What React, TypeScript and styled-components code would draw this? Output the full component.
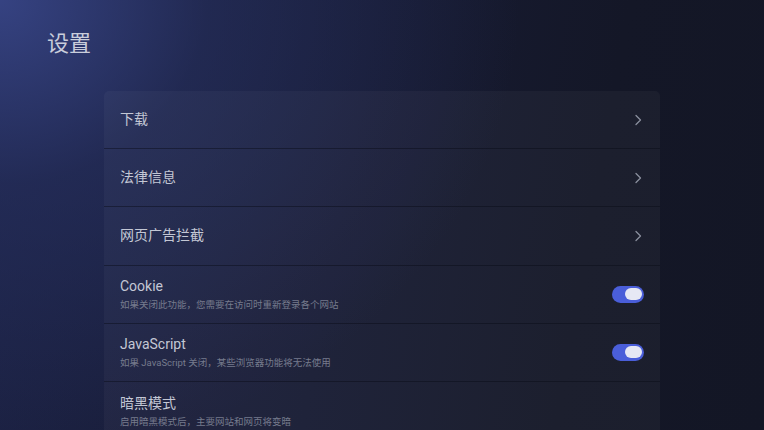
import React from "react";
import styled, { createGlobalStyle } from "styled-components";

const Global = createGlobalStyle`
  html, body { margin: 0; padding: 0; background: #131626; }
  * { box-sizing: border-box; }
`;

const Page = styled.div`
  width: 764px;
  height: 430px;
  overflow: hidden;
  font-family: Roboto, "Noto Sans CJK SC", sans-serif;
  background:
    radial-gradient(ellipse 520px 460px at 0% 0%, rgba(58, 72, 140, 0.85) 0%, rgba(40, 50, 100, 0.55) 40%, rgba(25, 30, 60, 0) 100%),
    linear-gradient(100deg, #1c2245 0%, #171b33 45%, #141727 75%, #131625 100%);
  display: flex;
  flex-direction: column;
`;

const Title = styled.h1`
  margin: 32px 0 0 47px;
  font-size: 22px;
  line-height: 24px;
  font-weight: 400;
  color: #c9cddb;
  letter-spacing: 0;
`;

const Card = styled.div`
  margin: 35px 0 0 104px;
  width: 556px;
  border-radius: 5px 5px 0 0;
  background: rgba(255, 255, 255, 0.035);
  display: flex;
  flex-direction: column;
`;

const Row = styled.div`
  height: 58.2px;
  flex-shrink: 0;
  display: flex;
  align-items: center;
  padding: 0 16px;
  border-bottom: 1px solid rgba(8, 10, 22, 0.45);
  &:last-child { border-bottom: none; }
`;

const Texts = styled.div`
  flex: 1;
  display: flex;
  flex-direction: column;
  gap: 4px;
`;

const Label = styled.div`
  font-size: 14px;
  line-height: 17px;
  color: #c3c7d4;
`;

const Sub = styled.div`
  font-size: 9.5px;
  line-height: 12px;
  color: #767b8d;
`;

const Switch = styled.div<{ on: boolean }>`
  width: 32px;
  height: 17px;
  border-radius: 9px;
  background: ${(p) => (p.on ? "#4a5ed9" : "#444857")};
  display: flex;
  align-items: center;
  justify-content: ${(p) => (p.on ? "flex-end" : "flex-start")};
  padding: 0 2px;
`;

const Knob = styled.div`
  width: 17px;
  height: 12px;
  border-radius: 6px;
  background: #e6e8f4;
`;

const Chevron = () => (
  <svg width="10" height="12" viewBox="0 0 10 12" style={{ marginRight: 1 }}>
    <path d="M3 1.5 L7.5 6 L3 10.5" fill="none" stroke="#8a8e9d" strokeWidth="1.3" strokeLinecap="round" strokeLinejoin="round" />
  </svg>
);

type Item = { label: string; sub?: string; kind: "link" | "switch" | "none"; on?: boolean };

const items: Item[] = [
  { label: "下载", kind: "link" },
  { label: "法律信息", kind: "link" },
  { label: "网页广告拦截", kind: "link" },
  { label: "Cookie", sub: "如果关闭此功能，您需要在访问时重新登录各个网站", kind: "switch", on: true },
  { label: "JavaScript", sub: "如果 JavaScript 关闭，某些浏览器功能将无法使用", kind: "switch", on: true },
  { label: "暗黑模式", sub: "启用暗黑模式后，主要网站和网页将变暗", kind: "none" },
];

export default function App() {
  return (
    <>
      <Global />
      <Page>
        <Title>设置</Title>
        <Card>
          {items.map((it) => (
            <Row key={it.label}>
              <Texts>
                <Label>{it.label}</Label>
                {it.sub && <Sub>{it.sub}</Sub>}
              </Texts>
              {it.kind === "link" && <Chevron />}
              {it.kind === "switch" && (
                <Switch on={!!it.on}>
                  <Knob />
                </Switch>
              )}
            </Row>
          ))}
        </Card>
      </Page>
    </>
  );
}
